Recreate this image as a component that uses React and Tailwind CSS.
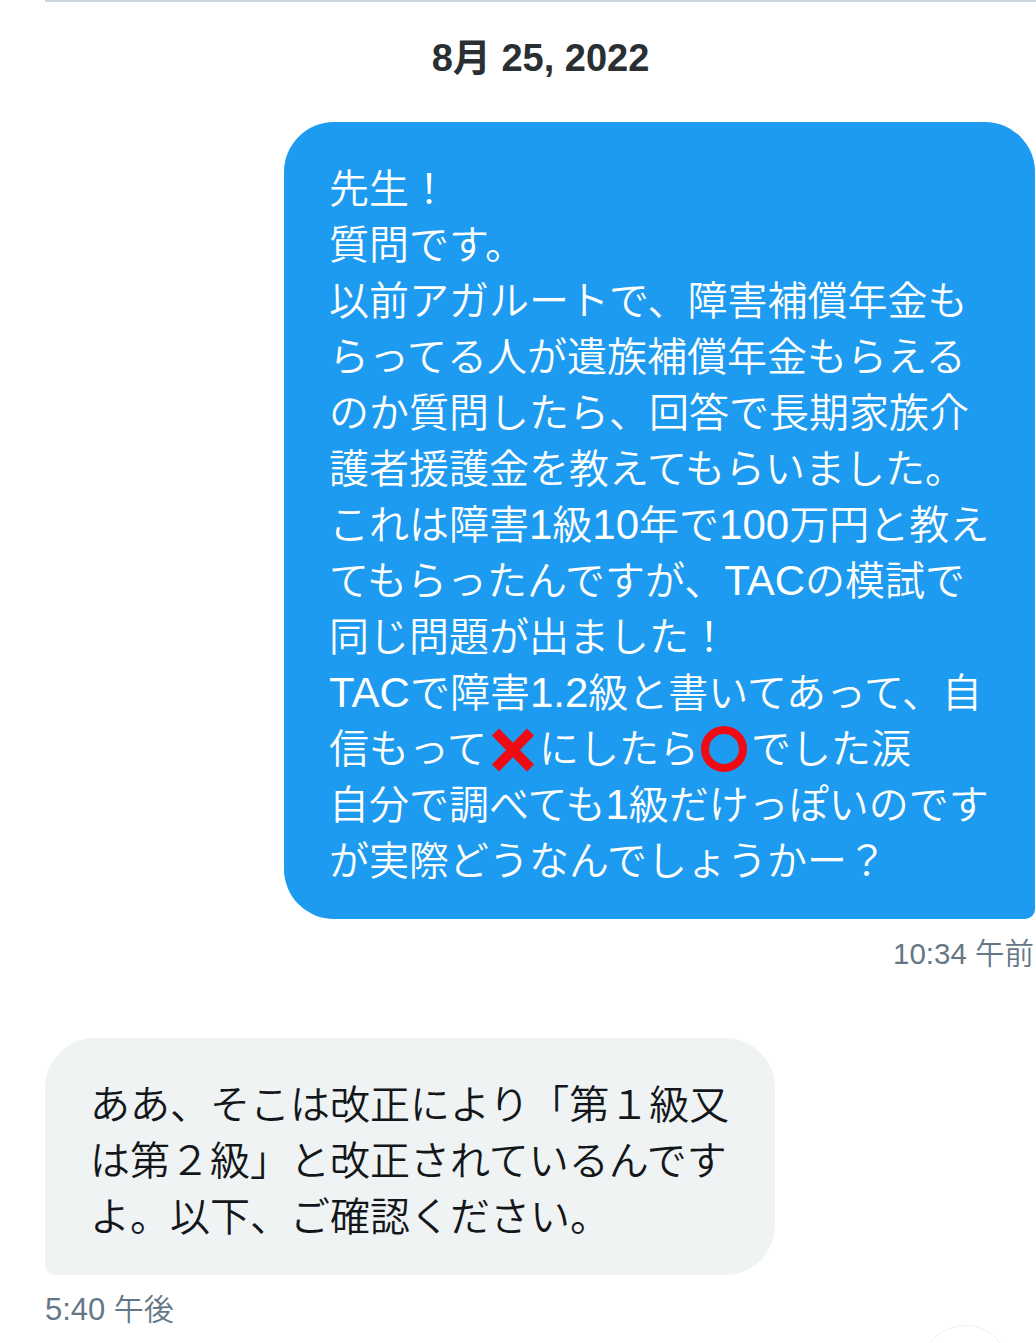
import React from 'react';

function Latin({ children }) {
    return <span className="text-[42px] leading-none">{children}</span>;
}

function CrossMark() {
    return (
        <svg viewBox="0 0 52 52" className="inline-block w-[52px] h-[52px] -my-2 align-[-5px]">
            <path d="M8.5 8 L43.5 44 M43.5 8 L8.5 44" stroke="#f00a14" strokeWidth="10" fill="none" />
        </svg>
    );
}

function CircleMark() {
    return (
        <svg viewBox="0 0 52 52" className="inline-block w-[52px] h-[52px] -my-2 align-[-5px]">
            <circle cx="25" cy="25" r="19" stroke="#f00a14" strokeWidth="8" fill="none" />
        </svg>
    );
}

function Line({ children }) {
    return <div className="h-14">{children}</div>;
}

export default function App() {
    return (
        <div className="relative w-[1036px] h-[1343px] overflow-hidden bg-white font-['Liberation_Sans','Noto_Sans_CJK_JP',sans-serif]">
            <div className="ml-[45px] h-[2px] bg-[#ccd6dd]" />

            <div className="mt-[33px] ml-[45px] text-center text-[38px] leading-[46px] font-bold text-[#292f33]">
                8月 25, 2022
            </div>

            <div className="mt-[41px] flex justify-end pr-px">
                <div className="w-[751px] h-[797px] pl-[45px] pt-[39px] bg-[#1d9bf0] rounded-[50px] rounded-br-[10px] text-[40px] leading-[56px] font-[350] text-white whitespace-nowrap">
                    <Line>先生！</Line>
                    <Line>質問です。</Line>
                    <Line>以前アガルートで、障害補償年金も</Line>
                    <Line>らってる人が遺族補償年金もらえる</Line>
                    <Line>のか質問したら、回答で長期家族介</Line>
                    <Line>護者援護金を教えてもらいました。</Line>
                    <Line>
                        これは障害<Latin>1</Latin>級<Latin>10</Latin>年で<Latin>100</Latin>万円と教え
                    </Line>
                    <Line>
                        てもらったんですが、<Latin>TAC</Latin>の模試で
                    </Line>
                    <Line>同じ問題が出ました！</Line>
                    <Line>
                        <Latin>TAC</Latin>で障害<Latin>1.2</Latin>級と書いてあって、自
                    </Line>
                    <Line>
                        信もって<CrossMark />にしたら<CircleMark />でした涙
                    </Line>
                    <Line>
                        自分で調べても<Latin>1</Latin>級だけっぽいのです
                    </Line>
                    <Line>が実際どうなんでしょうかー？</Line>
                </div>
            </div>

            <div className="mt-[15px] pr-[2px] text-right text-[29.5px] leading-10 font-[350] text-[#657786]">
                10:34 午前
            </div>

            <div className="mt-16 ml-[45px] w-[730px] h-[237px] pl-[45px] pt-[39px] bg-[#eff3f4] rounded-[50px] rounded-bl-[10px] text-[40px] leading-[56px] font-[350] text-[#14171a] whitespace-nowrap">
                <Line>ああ、そこは改正により「第１級又</Line>
                <Line>は第２級」と改正されているんです</Line>
                <Line>よ。以下、ご確認ください。</Line>
            </div>

            <div className="mt-[15px] ml-[45px] text-[30px] leading-10 font-[350] text-[#657786]">
                <span className="text-[31px]">5:40</span> 午後
            </div>

            <div className="absolute left-[920px] top-[1325px] w-[90px] h-[90px] rounded-full border border-[#eef0f1] bg-white" />
        </div>
    );
}
